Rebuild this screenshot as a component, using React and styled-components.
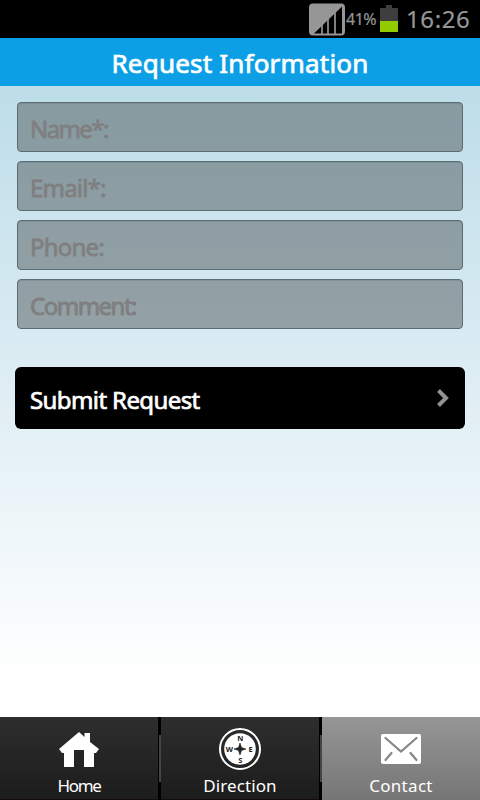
import styled, { createGlobalStyle } from "styled-components";

const GlobalStyle = createGlobalStyle`
	* {
		box-sizing: border-box;
	}
	body {
		margin: 0;
		font-family: "Noto Sans", "Open Sans", sans-serif;
	}
`;
const Screen = styled.div`
	width: 480px;
	height: 800px;
	display: flex;
	flex-direction: column;
	overflow: hidden;
	background: #fff;
`;
const StatusBar = styled.div`
	height: 38px;
	flex: none;
	display: flex;
	align-items: center;
	justify-content: flex-end;
	padding-right: 9px;
	background: #000;
	color: #969696;
`;
const Battery = styled.svg`
	margin: -2px 8px 0 3px;
`;
const StatusText = styled.span`
	width: ${(p) => p.$width}px;
	margin-left: ${(p) => p.$gap || 0}px;
	font-size: ${(p) => p.$size}px;
	letter-spacing: ${(p) => p.$spacing}px;
	line-height: 36px;
	white-space: nowrap;
	-webkit-text-stroke: 0.2px #969696;
`;
const Header = styled.h1`
	height: 48px;
	flex: none;
	margin: 0;
	background: #0d9fe6;
	color: #fff;
	font-size: 26px;
	font-weight: 400;
	line-height: 51px;
	letter-spacing: 0.2px;
	text-align: center;
	-webkit-text-stroke: 0.7px #fff;
`;
const Content = styled.form`
	flex: 1;
	display: flex;
	flex-direction: column;
	padding: 16px 15px 0;
	background: linear-gradient(#bddde8, #dbecf3 43%, #fff 94%);
`;
const Fields = styled.div`
	display: flex;
	flex-direction: column;
	gap: 9px;
	padding: 0 2px;
`;
const Field = styled.input`
	width: 100%;
	height: 50px;
	padding: 2px 12px 0;
	border: 1px solid #5c6c74;
	border-radius: 4px;
	outline: none;
	background: rgba(80, 88, 90, 0.5);
	box-shadow: inset 0 1px 1px rgba(60, 75, 82, 0.15);
	font-family: inherit;
	font-size: 24px;
	letter-spacing: ${(p) => p.$spacing}px;

	&::placeholder {
		color: #807f80;
		opacity: 1;
		-webkit-text-stroke: 0.8px #807f80;
	}
`;
const SubmitButton = styled.button`
	height: 62px;
	margin-top: 38px;
	padding: 3px 14px 0 15px;
	display: flex;
	align-items: center;
	justify-content: space-between;
	border: 0;
	border-radius: 6px;
	background: #000;
	color: #fff;
	font-family: inherit;
	font-size: 24px;
	font-weight: 400;
	letter-spacing: -0.6px;
	-webkit-text-stroke: 0.7px #fff;

	svg {
		margin-top: -3px;
	}
`;
const TabBar = styled.nav`
	height: 83px;
	flex: none;
	display: flex;
	background: #000;
`;
const Tab = styled.a`
	flex: 1;
	display: flex;
	flex-direction: column;
	align-items: center;
	padding-top: 11px;
	border-bottom: 1px solid ${(p) => (p.$active ? "#747474" : "#160b0b")};
	background: ${(p) =>
		p.$active
			? "linear-gradient(#969696, #767676)"
			: "linear-gradient(#2e2e2e, #1c1c1c)"};
	color: #fff;
	font-size: 17px;
	letter-spacing: ${(p) => p.$spacing}px;

	svg {
		display: block;
		flex: none;
	}
	span {
		height: 24px;
		margin-top: 4px;
		line-height: 24px;
	}
`;
const Divider = styled.div`
	width: 3px;
	padding: 18px 0 18px 1px;
	background: #000;

	&::before {
		content: "";
		display: block;
		width: 2px;
		height: 47px;
		background: #454545;
	}
`;

const SignalIcon = () => (
	<svg width="36" height="33" viewBox="0 0 36 33">
		<rect y="0.5" width="36" height="32" rx="4" fill="#969696" />
		<path d="M5 30.5 33 3.5v27z" fill="#000" />
		<path
			d="M13 22v9M19 16v15M26 9v22"
			stroke="#969696"
			strokeWidth="1.7"
		/>
	</svg>
);

const BatteryIcon = () => (
	<Battery width="18" height="27" viewBox="0 0 18 27">
		<path d="M6 0h6v3h6v13H0V3h6z" fill="#3e3e3e" />
		<path d="M0 16h18v11H0z" fill="#91cb00" />
	</Battery>
);

const ChevronIcon = () => (
	<svg width="16" height="20" viewBox="0 0 16 20">
		<path
			d="m3.5 2.5 7.5 7.5L3.5 17.5"
			fill="none"
			stroke="#929292"
			strokeWidth="4"
		/>
	</svg>
);

const HomeIcon = () => (
	<svg width="42" height="42" viewBox="0 0 42 42">
		<path
			d="M21 4 26.5 9V5H32v9l9 7-3 4h-2v14H26V22H16v17H6V25H4l-3-4z"
			fill="#fff"
		/>
	</svg>
);

const CompassIcon = () => (
	<svg
		width="42"
		height="42"
		viewBox="0 0 42 42"
		fontFamily="Noto Sans, sans-serif"
		fontSize="7.5"
		fontWeight="700"
		letterSpacing="0"
		textAnchor="middle"
	>
		<circle cx="21" cy="21" r="20" fill="none" stroke="#fff" strokeWidth="2" />
		<circle cx="21" cy="21" r="15.8" fill="#fff" />
		<path
			d="M21 15 22.5 19.5 27 21 22.5 22.5 21 27 19.5 22.5 15 21 19.5 19.5z"
			fill="#222"
			stroke="#222"
			strokeWidth="0.6"
		/>
		<text x="21.4" y="12.7" fill="#222">N</text>
		<text x="31.5" y="23.7" fill="#222">E</text>
		<text x="21.4" y="34.5" fill="#222">S</text>
		<text x="10.5" y="23.7" fill="#222">W</text>
	</svg>
);

const MailIcon = () => (
	<svg width="42" height="42" viewBox="0 0 42 42">
		<rect x="1" y="6" width="40" height="30" rx="2" fill="#fff" />
		<path
			d="M5.5 10 21 23.5 36.5 10M5.5 32l6-7M36.5 32l-6-7"
			fill="none"
			stroke="#868686"
			strokeWidth="2.2"
			strokeLinecap="round"
		/>
	</svg>
);

const fields = [
	{ label: "Name*:", spacing: -1.6 },
	{ label: "Email*:", spacing: -0.8 },
	{ label: "Phone:", spacing: -0.8 },
	{ label: "Comment:", spacing: -1.5 },
];

const App = () => {
	return (
		<>
			<GlobalStyle />
			<Screen>
				<StatusBar>
					<SignalIcon />
					<StatusText $size={16} $width={31} $gap={1} $spacing={-0.5}>
						41%
					</StatusText>
					<BatteryIcon />
					<StatusText $size={24} $width={65} $spacing={0.6}>
						16:26
					</StatusText>
				</StatusBar>
				<Header>Request Information</Header>
				<Content onSubmit={(e) => e.preventDefault()}>
					<Fields>
						{fields.map((f) => (
							<Field key={f.label} placeholder={f.label} $spacing={f.spacing} />
						))}
					</Fields>
					<SubmitButton>
						Submit Request
						<ChevronIcon />
					</SubmitButton>
				</Content>
				<TabBar>
					<Tab $spacing={-1.4}>
						<HomeIcon />
						<span>Home</span>
					</Tab>
					<Divider />
					<Tab $spacing={0.1}>
						<CompassIcon />
						<span>Direction</span>
					</Tab>
					<Divider />
					<Tab $active $spacing={0.3}>
						<MailIcon />
						<span>Contact</span>
					</Tab>
				</TabBar>
			</Screen>
		</>
	);
};

export default App;
